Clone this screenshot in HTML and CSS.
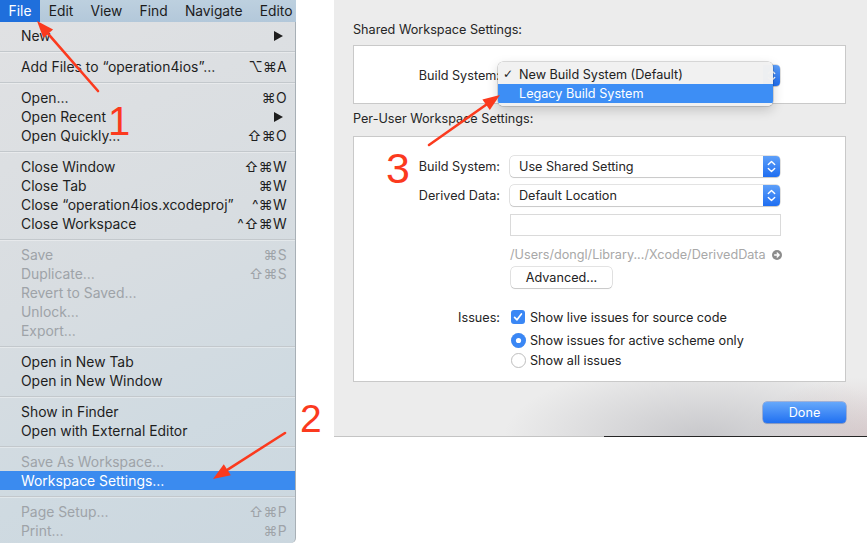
FILE: index.html
```html
<!DOCTYPE html>
<html>
<head>
<meta charset="utf-8">
<title>Workspace Settings</title>
<link rel="stylesheet" href="styles.css">
</head>
<body>
<div class="page">
  <div class="menushot">
    <div class="menubar">
      <span class="mb active">File</span>
      <span class="mb">Edit</span>
      <span class="mb">View</span>
      <span class="mb">Find</span>
      <span class="mb">Navigate</span>
      <span class="mb last">Edito</span>
    </div>
    <div class="menu">
      <div class="item"><span>New</span><span class="sub"></span></div>
      <div class="sep"></div>
      <div class="item"><span>Add Files to “operation4ios”…</span><span class="key">⌥⌘A</span></div>
      <div class="sep"></div>
      <div class="item"><span>Open…</span><span class="key">⌘O</span></div>
      <div class="item"><span>Open Recent</span><span class="sub"></span></div>
      <div class="item"><span>Open Quickly…</span><span class="key">⇧⌘O</span></div>
      <div class="sep"></div>
      <div class="item"><span>Close Window</span><span class="key">⇧⌘W</span></div>
      <div class="item"><span>Close Tab</span><span class="key">⌘W</span></div>
      <div class="item"><span>Close “operation4ios.xcodeproj”</span><span class="key">^⌘W</span></div>
      <div class="item"><span>Close Workspace</span><span class="key">^⇧⌘W</span></div>
      <div class="sep"></div>
      <div class="item dis"><span>Save</span><span class="key">⌘S</span></div>
      <div class="item dis"><span>Duplicate…</span><span class="key">⇧⌘S</span></div>
      <div class="item dis"><span>Revert to Saved…</span></div>
      <div class="item dis"><span>Unlock…</span></div>
      <div class="item dis"><span>Export…</span></div>
      <div class="sep"></div>
      <div class="item"><span>Open in New Tab</span></div>
      <div class="item"><span>Open in New Window</span></div>
      <div class="sep"></div>
      <div class="item"><span>Show in Finder</span></div>
      <div class="item"><span>Open with External Editor</span></div>
      <div class="sep"></div>
      <div class="item dis"><span>Save As Workspace…</span></div>
      <div class="item hl"><span>Workspace Settings…</span></div>
      <div class="sep"></div>
      <div class="item dis"><span>Page Setup…</span><span class="key">⇧⌘P</span></div>
      <div class="item dis"><span>Print…</span><span class="key">⌘P</span></div>
    </div>
  </div>

  <div class="right">
    <div class="dialog">
      <div class="sect-title">Shared Workspace Settings:</div>
      <div class="box box-shared">
        <div class="row">
          <span class="lbl">Build System:</span>
          <div class="popup"><span class="pv">New Build System (Default)</span>
            <span class="stepper"><svg width="17" height="21" viewBox="0 0 17 21"><path d="M5.3 8.6 8.5 5.6 11.7 8.6M5.3 12.4 8.5 15.4 11.7 12.4" fill="none" stroke="#fff" stroke-width="1.4" stroke-linecap="round" stroke-linejoin="round"/></svg></span>
          </div>
        </div>
        <div class="dropdown">
          <div class="dd-item"><span class="check">✓</span>New Build System (Default)</div>
          <div class="dd-item dd-hl">Legacy Build System</div>
        </div>
      </div>

      <div class="sect-title second">Per-User Workspace Settings:</div>
      <div class="box box-user">
        <div class="row">
          <span class="lbl">Build System:</span>
          <div class="popup"><span class="pv">Use Shared Setting</span>
            <span class="stepper"><svg width="17" height="21" viewBox="0 0 17 21"><path d="M5.3 8.6 8.5 5.6 11.7 8.6M5.3 12.4 8.5 15.4 11.7 12.4" fill="none" stroke="#fff" stroke-width="1.4" stroke-linecap="round" stroke-linejoin="round"/></svg></span>
          </div>
        </div>
        <div class="row r-derived">
          <span class="lbl">Derived Data:</span>
          <div class="popup"><span class="pv">Default Location</span>
            <span class="stepper"><svg width="17" height="21" viewBox="0 0 17 21"><path d="M5.3 8.6 8.5 5.6 11.7 8.6M5.3 12.4 8.5 15.4 11.7 12.4" fill="none" stroke="#fff" stroke-width="1.4" stroke-linecap="round" stroke-linejoin="round"/></svg></span>
          </div>
        </div>
        <div class="row r-field">
          <span class="lbl"></span>
          <div class="field"></div>
        </div>
        <div class="row r-path">
          <span class="lbl"></span>
          <div class="path">/Users/dongl/Library.../Xcode/DerivedData<svg class="goto" width="10" height="10" viewBox="0 0 10 10"><circle cx="5" cy="5" r="5" fill="#8c8c8c"/><path d="M2.6 5H7.2M5.2 3 7.2 5 5.2 7" fill="none" stroke="#fff" stroke-width="1.3" stroke-linecap="round" stroke-linejoin="round"/></svg></div>
        </div>
        <div class="row r-adv">
          <span class="lbl"></span>
          <div class="btn">Advanced...</div>
        </div>
        <div class="row r-issues">
          <span class="lbl">Issues:</span>
          <div class="opt"><svg class="cb" width="14" height="14" viewBox="0 0 14 14"><rect width="14" height="14" rx="3" fill="#3a87f5"/><path d="M3.6 7.3 6 9.8 10.4 4" fill="none" stroke="#fff" stroke-width="1.7" stroke-linecap="round" stroke-linejoin="round"/></svg>Show live issues for source code</div>
        </div>
        <div class="row r-radio1">
          <span class="lbl"></span>
          <div class="opt"><svg class="rb" width="15" height="15" viewBox="0 0 15 15"><circle cx="7.5" cy="7.5" r="7.5" fill="#3a87f5"/><circle cx="7.5" cy="7.5" r="2.6" fill="#fff"/></svg>Show issues for active scheme only</div>
        </div>
        <div class="row r-radio2">
          <span class="lbl"></span>
          <div class="opt"><svg class="rb" width="15" height="15" viewBox="0 0 15 15"><circle cx="7.5" cy="7.5" r="7" fill="#fff" stroke="#bdbdbd" stroke-width="0.9"/></svg>Show all issues</div>
        </div>
      </div>

      <div class="actions"><div class="done">Done</div></div>
    </div>
  </div>
</div>

<svg class="annot" width="867" height="543" viewBox="0 0 867 543">
  <g stroke="#fb3a1e" stroke-width="2.6" stroke-linecap="round" fill="none">
    <path d="M98 91 48.2 33.8"/>
    <path d="M285 433 227.3 469.8"/>
    <path d="M429 145 486.1 104.8"/>
  </g>
  <g fill="#fb3a1e">
    <polygon points="37,21 53.1,29.5 43.3,38.1"/>
    <polygon points="213,479 223.8,464.3 230.8,475.3"/>
    <polygon points="500,95 489.8,110.1 482.4,99.5"/>
  </g>
  <g class="digits" fill="#fb3a1e">
    <text x="108" y="135" font-size="40">1</text>
    <text x="300" y="432" font-size="39">2</text>
    <text x="386" y="183" font-size="43">3</text>
  </g>
</svg>
</body>
</html>
```

FILE: styles.css
```css
* { box-sizing: border-box; }
html, body { margin: 0; padding: 0; }
body {
  width: 867px;
  height: 543px;
  overflow: hidden;
  background: #ffffff;
  font-family: "Inter", "Liberation Sans", "DejaVu Sans", sans-serif;
  position: relative;
  color: #222;
}
.page { display: flex; height: 543px; }

/* ---------- menu screenshot ---------- */
.menushot {
  width: 296px;
  flex: none;
  height: 543px;
  display: flex;
  flex-direction: column;
}
.menubar {
  height: 22px;
  flex: none;
  background: linear-gradient(#bdd0df, #b3c8da);
  display: flex;
  overflow: hidden;
  white-space: nowrap;
  font-size: 13.8px;
  color: #1c1c1c;
}
.mb { padding: 0 8.6px; line-height: 22px; flex: none; }
.mb.active { background: #1f6fdc; color: #fff; }
.mb.last { padding-right: 0; }

.menu {
  flex: 1;
  padding-top: 4px;
  background: linear-gradient(155deg, #e0e1e3 0%, #d8dde1 45%, #cfdae1 75%, #cbd7df 100%);
  border-right: 1px solid #a8b0b6;
  border-bottom-right-radius: 5px;
  font-size: 13.9px;
  color: #1e1e1e;
}
.item {
  height: 19px;
  display: flex;
  align-items: center;
  justify-content: space-between;
  padding: 0 8px 0 21px;
  white-space: nowrap;
}
.item.dis { color: #9ea3a8; }
.item.hl { background: #3b8bef; color: #fff; }
.key { font-family: "Inter", "DejaVu Sans", sans-serif; letter-spacing: 0.3px; }
.sub {
  width: 0; height: 0;
  border-left: 9px solid #1e1e1e;
  border-top: 5px solid transparent;
  border-bottom: 5px solid transparent;
  margin-right: 4px;
}
.sep {
  height: 12px;
  display: flex;
  align-items: center;
}
.sep::before {
  content: "";
  display: block;
  width: 100%;
  height: 1px;
  background: #c3c8cc;
  box-shadow: 0 1px 0 rgba(255,255,255,0.35);
}

/* ---------- dialog ---------- */
.right { flex: 1; padding-left: 38px; }
.dialog {
  height: 437px;
  padding: 22px 21px 0 19px;
  background-color: #ececec;
  background-image:
    linear-gradient(to right, #c4c4c4 270px, #262626 270px),
    radial-gradient(ellipse 200px 75px at 370px 100%, rgba(170,170,176,0.55), rgba(200,200,204,0) 100%),
    radial-gradient(ellipse 120px 60px at 100% 100%, rgba(205,180,182,0.55), rgba(220,200,200,0) 100%);
  background-size: 100% 1px, 100% 100%, 100% 100%;
  background-position: left bottom, 0 0, 0 0;
  background-repeat: no-repeat;
  font-size: 12.65px;
  color: #262626;
}
.sect-title { line-height: 16px; margin-bottom: 7px; }
.sect-title.second { margin-top: 7px; margin-bottom: 9px; }
.box {
  background: #fff;
  border: 1px solid #c9c9c9;
  position: relative;
}
.box-shared { height: 59px; padding-top: 19px; }
.box-user { padding: 19px 0 11px 0; }

.row { display: flex; align-items: center; gap: 10px; }
.lbl { width: 146px; flex: none; text-align: right; white-space: nowrap; }

.popup {
  width: 270px;
  height: 21px;
  background: #fff;
  border-radius: 4px;
  box-shadow: 0 0 0 0.5px rgba(0,0,0,0.22), 0 1px 1px rgba(0,0,0,0.12);
  display: flex;
  align-items: center;
  justify-content: space-between;
  padding-left: 9px;
  overflow: hidden;
}
.pv { white-space: nowrap; }
.stepper {
  width: 17px;
  height: 21px;
  background: linear-gradient(#5d9ff9, #1f6ef1);
  display: flex;
}

.r-derived { margin-top: 8px; }
.r-field { margin-top: 8px; }
.field {
  width: 271px;
  height: 22px;
  border: 1px solid #dadada;
  background: #fff;
}
.r-path { margin-top: 11px; }
.path {
  line-height: 16px;
  color: #a8a8a8;
  display: flex;
  align-items: center;
  white-space: nowrap;
}
.goto { margin-left: 6px; }
.r-adv { margin-top: 4px; }
.btn {
  width: 101px;
  height: 21px;
  margin-left: 1px;
  background: #fff;
  border-radius: 4px;
  box-shadow: 0 0 0 0.5px rgba(0,0,0,0.22), 0 1px 1px rgba(0,0,0,0.12);
  display: flex;
  align-items: center;
  justify-content: center;
  color: #222;
}
.r-issues { margin-top: 20px; height: 18px; }
.r-radio1 { margin-top: 4px; height: 20px; }
.r-radio2 { height: 20px; }
.opt { display: flex; align-items: center; white-space: nowrap; color: #222; }
.cb { margin-left: 1px; margin-right: 5px; flex: none; }
.rb { margin-left: 1px; margin-right: 4px; flex: none; filter: drop-shadow(0 0.5px 0.5px rgba(0,0,0,0.12)); }

.dropdown {
  position: absolute;
  left: 144px;
  top: 16px;
  width: 275px;
  height: 44px;
  padding-top: 3px;
  background: rgba(241,241,241,0.98);
  border-radius: 5px;
  box-shadow: 0 0 0 0.5px rgba(0,0,0,0.25), 0 4px 12px rgba(0,0,0,0.18);
  overflow: hidden;
  color: #222;
}
.dd-item {
  height: 19px;
  line-height: 19px;
  padding-left: 21px;
  position: relative;
  white-space: nowrap;
}
.dd-hl { background: #3d8ef5; color: #fff; }
.check {
  position: absolute;
  left: 5px;
  top: 0;
  font-family: "DejaVu Sans", sans-serif;
  font-size: 12px;
}

.actions { display: flex; justify-content: flex-end; margin-top: 20px; }
.done {
  width: 83px;
  height: 21px;
  border-radius: 4px;
  background: linear-gradient(#66a8fb, #2070f1);
  box-shadow: 0 0 0 0.5px rgba(20,80,200,0.6), 0 1px 1px rgba(0,0,0,0.12);
  color: #fff;
  display: flex;
  align-items: center;
  justify-content: center;
}

/* ---------- annotations ---------- */
.annot {
  position: absolute;
  left: 0;
  top: 0;
  pointer-events: none;
}
.digits text { font-family: "Liberation Sans", sans-serif; }
```
